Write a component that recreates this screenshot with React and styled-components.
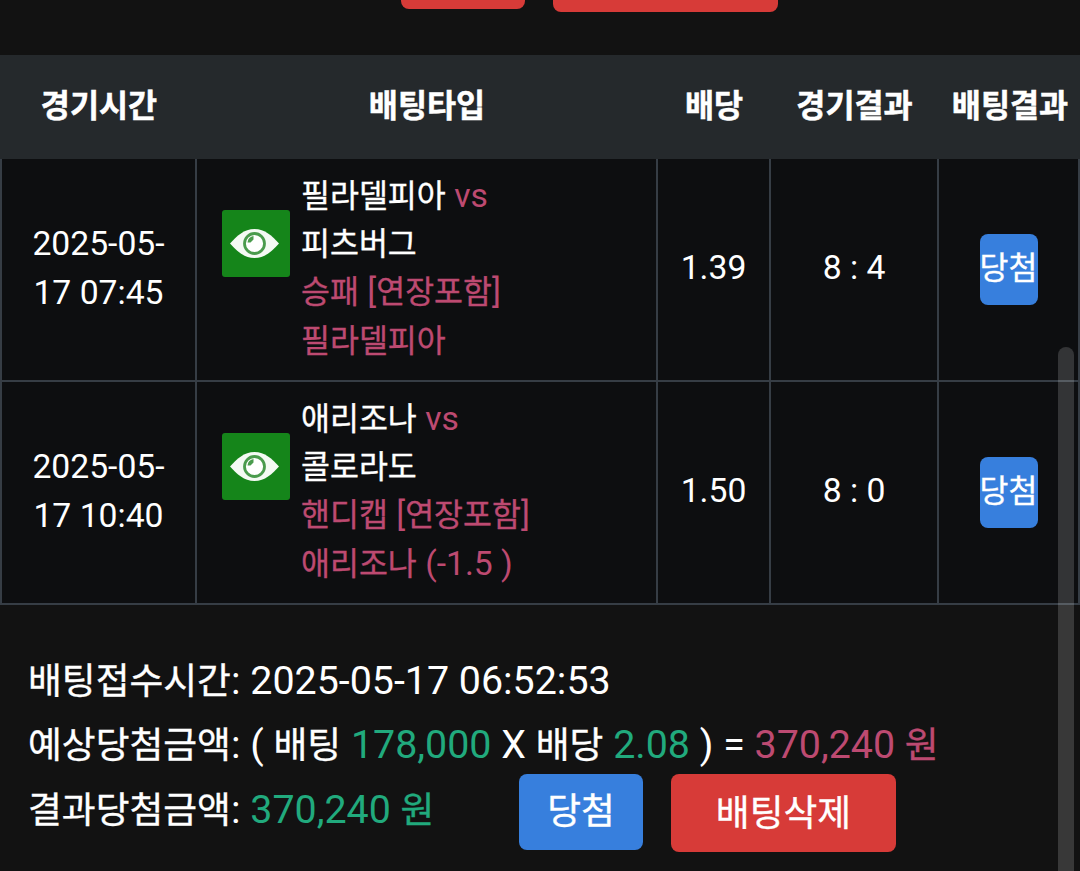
import React from 'react';
import styled, { createGlobalStyle } from 'styled-components';

const GlobalStyle = createGlobalStyle`
* {
box-sizing: border-box;
}

body {
margin: 0;
background: #121212;
color: #fff;
font-family: Roboto, "Noto Sans CJK KR", sans-serif;
overflow: hidden;
}
`

const Page = styled.div`
height: 871px;
overflow: hidden;
`

// hangul runs slightly smaller than the latin digits next to it
const Ko = styled.span`
font-family: "Noto Sans CJK KR", sans-serif;
font-size: 0.934em;
line-height: 1;
-webkit-text-stroke: 0.35px currentColor;
`

const TopBar = styled.div`
height: 55px;
display: flex;
align-items: flex-start;
gap: 28px;
padding-left: 401px;
`

const TopButton = styled.div`
width: ${props => props.$width}px;
height: ${props => props.$height}px;
background: #d73b38;
border-radius: 0 0 8px 8px;
`

const Row = styled.div`
display: grid;
grid-template-columns: 195px 461px 113px 168px 143px;
`

const HeadRow = styled(Row)`
height: 104px;
background: #25292c;
`

const HeadCell = styled.div`
display: flex;
align-items: center;
justify-content: center;
padding: 0 0 9px 3px;
font-family: "Noto Sans CJK KR", sans-serif;
font-size: 31.6px;
font-weight: 700;
white-space: nowrap;
-webkit-text-stroke: 0.5px currentColor;
`

const BodyRow = styled(Row)`
height: 223px;
background: #0d0e10;
border-bottom: 2px solid #363d45;
font-size: 33.7px;
line-height: 48.4px;
`

const Cell = styled.div`
display: flex;
align-items: center;
justify-content: center;
border-left: 2px solid #363d45;
text-align: center;
padding-bottom: 2px;

&:last-child {
border-right: 2px solid #363d45;
}
`

const MatchCell = styled(Cell)`
align-items: flex-start;
justify-content: flex-start;
gap: 11px;
padding: 12.5px 0 0 25px;
text-align: left;
`

const EyeBox = styled.div`
width: 68px;
height: 67px;
margin-top: 38.5px;
background: #15851a;
border-radius: 3px;
`

const Pink = styled.span`
color: #bd4a71;
`

const Green = styled.span`
color: #21aa7d;
`

const Badge = styled.div`
width: 58px;
height: 71px;
margin-top: 2px;
padding-top: 10px;
background: #377fdd;
border-radius: 8px;
white-space: nowrap;
`

const Summary = styled.div`
padding: 44px 0 0 28px;
font-size: 39.38px;
line-height: 64.3px;
white-space: pre;
`

const Line = styled.div`
height: 64.3px;
display: flex;
align-items: flex-start;
`

const Button = styled.div`
width: ${props => props.$width}px;
height: ${props => props.$height}px;
margin-left: ${props => props.$gap}px;
margin-top: -3.6px;
background: ${props => props.$red ? '#d73b38' : '#377fdd'};
border-radius: 8px;
display: flex;
align-items: center;
justify-content: center;
padding-bottom: ${props => props.$red ? 5 : 8}px;
`

const ScrollThumb = styled.div`
position: fixed;
top: 347px;
right: 6px;
bottom: 0;
width: 16px;
background: rgba(255, 255, 255, 0.16);
border-radius: 8px 8px 0 0;
`

const Eye = () => (
    <svg width="68" height="67" viewBox="0 0 68 67">
        <path d="M8 33.5C15 26 22 19 32.5 19S50 26 57 33.5C50 41 43 48 32.5 48S15 41 8 33.5Z" fill="#f4faf4" />
        <circle cx="32.5" cy="33.5" r="10" fill="#fff" stroke="#4a9b4d" strokeWidth="2.8" />
        <path d="M25.500 32.500C26 28.500 28 26.500 31.500 26V29.500L28.500 32.500Z" fill="#4a9b4d" />
    </svg>
)

const heads = ['경기시간', '배팅타입', '배당', '경기결과', '배팅결과']

const bets = [
    { day: '2025-05-', time: '17 07:45', home: '필라델피아', away: '피츠버그', type: '승패', pick: '필라델피아', line: '', odds: '1.39', score: '8 : 4' },
    { day: '2025-05-', time: '17 10:40', home: '애리조나', away: '콜로라도', type: '핸디캡', pick: '애리조나', line: ' (-1.5 )', odds: '1.50', score: '8 : 0' },
]

function App() {
    const rows = bets.map((bet, i) => {
        return (
            <BodyRow key={i}>
                <Cell>{bet.day}<br />{bet.time}</Cell>
                <MatchCell>
                    <EyeBox><Eye /></EyeBox>
                    <div>
                        <div><Ko>{bet.home}</Ko> <Pink>vs</Pink></div>
                        <div><Ko>{bet.away}</Ko></div>
                        <div><Pink><Ko>{bet.type}</Ko> [<Ko>연장포함</Ko>]</Pink></div>
                        <div><Pink><Ko>{bet.pick}</Ko>{bet.line}</Pink></div>
                    </div>
                </MatchCell>
                <Cell>{bet.odds}</Cell>
                <Cell>{bet.score}</Cell>
                <Cell><Badge><Ko>당첨</Ko></Badge></Cell>
            </BodyRow>
        )
    })

    return (
        <Page>
            <GlobalStyle />
            <TopBar>
                <TopButton $width={124} $height={9} />
                <TopButton $width={225} $height={12} />
            </TopBar>
            <HeadRow>
                {heads.map(head => <HeadCell key={head}>{head}</HeadCell>)}
            </HeadRow>
            {rows}
            <Summary>
                <Line><span><Ko>배팅접수시간</Ko>: 2025-05-17 06:52:53</span></Line>
                <Line>
                    <span><Ko>예상당첨금액</Ko>: ( <Ko>배팅</Ko> <Green>178,000</Green> X <Ko>배당</Ko> <Green>2.08</Green> ) = <Pink>370,240 <Ko>원</Ko></Pink></span>
                </Line>
                <Line>
                    <span><Ko>결과당첨금액</Ko>: <Green>370,240 <Ko>원</Ko></Green></span>
                    <Button $width={124} $height={76} $gap={84.6}><Ko>당첨</Ko></Button>
                    <Button $width={225} $height={78} $gap={28} $red><Ko>배팅삭제</Ko></Button>
                </Line>
            </Summary>
            <ScrollThumb />
        </Page>
    )
}

export default App
